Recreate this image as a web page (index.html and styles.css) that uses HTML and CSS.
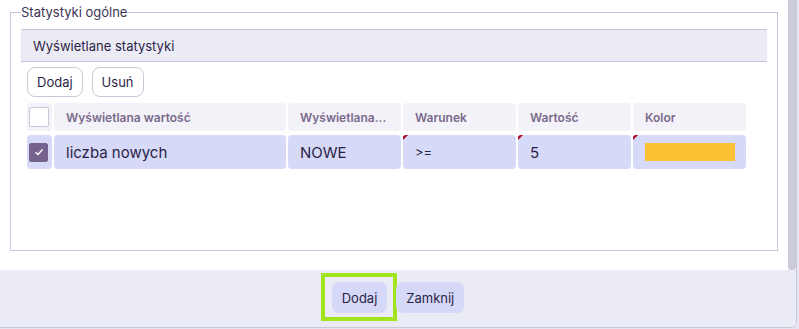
FILE: index.html
```html
<!DOCTYPE html>
<html lang="pl">
<head>
<meta charset="UTF-8">
<meta name="viewport" content="width=device-width, initial-scale=1.0">
<link rel="stylesheet" href="styles.css">
<title>Statystyki</title>
</head>
<body>
  <div class="dialog">
    <div class="dialog-body">
      <div class="dialog-content">
        <fieldset class="group">
          <legend>Statystyki ogólne</legend>
          <div class="panel">
            <div class="panel-title">Wyświetlane statystyki</div>
            <div class="toolbar">
              <button class="btn">Dodaj</button>
              <button class="btn">Usuń</button>
            </div>
            <div class="grid">
              <div class="cell head check-cell"><span class="check"></span></div>
              <div class="cell head">Wyświetlana wartość</div>
              <div class="cell head">Wyświetlana...</div>
              <div class="cell head">Warunek</div>
              <div class="cell head">Wartość</div>
              <div class="cell head">Kolor</div>

              <div class="cell row check-cell"><span class="check checked">
                <svg width="10" height="8" viewBox="0 0 10 8"><path d="M1.5 4.2 L4 6.5 L8.5 1.5" fill="none" stroke="#fff" stroke-width="1.4"/></svg>
              </span></div>
              <div class="cell row">liczba nowych</div>
              <div class="cell row">NOWE</div>
              <div class="cell row dirty small">&gt;=</div>
              <div class="cell row dirty">5</div>
              <div class="cell row dirty"><span class="swatch" style="background:#fcc034;"></span></div>
            </div>
          </div>
        </fieldset>
      </div>
      <div class="scroll-thumb"></div>
    </div>
    <div class="dialog-footer">
      <button class="btn-main focused">Dodaj</button>
      <button class="btn-main">Zamknij</button>
    </div>
  </div>
</body>
</html>
```

FILE: styles.css
```css
* {
  box-sizing: border-box;
}
body {
  margin: 0;
  background-color: #e6e6f3;
  font-family: "Inter", "Noto Sans", sans-serif;
  color: #2b1f47;
}
.dialog {
  width: 797px;
  height: 328px;
  background-color: #ffffff;
  border-right: 1px solid #c9c9dd;
  border-bottom: 1px solid #c9c9dd;
  border-bottom-right-radius: 6px;
  overflow: hidden;
  display: flex;
  flex-direction: column;
}
.dialog-body {
  height: 270px;
  display: flex;
}
.dialog-content {
  flex: 1;
  padding: 4px 10px 0 10px;
}
.scroll-thumb {
  width: 8px;
  background-color: #cbcbd9;
  border-bottom-left-radius: 3px;
  border-bottom-right-radius: 3px;
}

/* group box */
.group {
  margin: 0;
  border: 1px solid #c5c5df;
  padding: 9px 10px 81px 10px;
  min-width: 0;
}
.group legend {
  padding: 0;
  font-size: 13px;
  line-height: 16px;
  color: #3d3454;
}
.panel-title {
  height: 33px;
  background-color: #ebebf5;
  border-top: 1px solid #c5c5df;
  border-bottom: 1px solid #c5c5df;
  font-size: 13px;
  padding-left: 12px;
  display: flex;
  align-items: center;
}
.toolbar {
  display: flex;
  gap: 9px;
  padding: 5px 6px 0 6px;
}
.btn {
  height: 30px;
  padding: 0 9px;
  background-color: #ffffff;
  border: 1px solid #c9c9d9;
  border-radius: 8px;
  font-family: inherit;
  font-size: 13px;
  color: #2b1f47;
}

/* table */
.grid {
  display: grid;
  grid-template-columns: 25px 232px repeat(4, 113px);
  grid-template-rows: 28px 34px;
  column-gap: 2px;
  row-gap: 4px;
  padding: 6px 6px 0 6px;
}
.cell {
  border-radius: 4px;
  display: flex;
  align-items: center;
  padding-left: 12px;
  position: relative;
}
.head {
  background-color: #f2f2f8;
  color: #7b6a8c;
  font-size: 12px;
  font-weight: 600;
}
.row {
  background-color: #d6d9f7;
  font-size: 15px;
}
.row.small {
  font-size: 13px;
}
.check-cell {
  padding-left: 2px;
}
.check {
  width: 20px;
  height: 20px;
  border: 1px solid #c8c8d8;
  border-radius: 2px;
  background-color: #ffffff;
  display: flex;
  align-items: center;
  justify-content: center;
}
.check.checked {
  background-color: #76628e;
  border-color: #76628e;
  width: 19px;
  height: 19px;
}
.dirty::before {
  content: "";
  position: absolute;
  left: 0;
  top: 0;
  border-top: 5px solid #b0001c;
  border-right: 5px solid transparent;
  border-top-left-radius: 3px;
}
.swatch {
  display: block;
  width: 90px;
  height: 18px;
}

/* footer */
.dialog-footer {
  flex: 1;
  background-color: #ebebf5;
  display: flex;
  justify-content: center;
  align-items: center;
  gap: 9px;
  padding-bottom: 2px;
}
.btn-main {
  height: 31px;
  padding: 0 10px;
  background-color: #d5d8f6;
  border: none;
  border-radius: 7px;
  font-family: inherit;
  font-size: 13px;
  color: #2b1f47;
  position: relative;
}
.btn-main.focused::after {
  content: "";
  position: absolute;
  left: -11px;
  right: -10px;
  top: -9px;
  bottom: -8px;
  border: 4px solid #a2e41c;
}
```
